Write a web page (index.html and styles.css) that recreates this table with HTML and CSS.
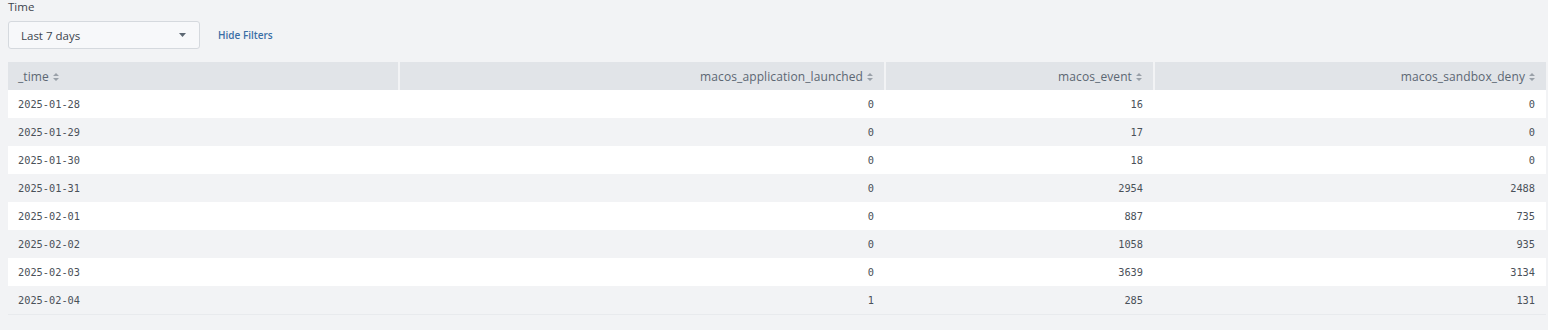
FILE: index.html
```html
<!DOCTYPE html>
<html>
<head>
<meta charset="utf-8">
<link rel="stylesheet" href="styles.css">
</head>
<body>
<div class="page">
  <div class="filters">
    <div class="label">Time</div>
    <div class="filter-row">
      <div class="dropdown">
        <span>Last 7 days</span>
        <svg class="caret" width="7" height="4" viewBox="0 0 7 4"><path d="M0 0 H7 L3.5 4 Z" fill="#5c6773"/></svg>
      </div>
      <a class="hide">Hide Filters</a>
    </div>
  </div>
  <table class="grid">
    <colgroup>
      <col class="c1"><col class="c2"><col class="c3"><col class="c4">
    </colgroup>
    <thead>
      <tr>
        <th class="left">_time<svg class="sort" width="6" height="8" viewBox="0 0 6 8"><path d="M0 3 L3 0 L6 3 Z M0 5 L6 5 L3 8 Z" fill="#9aa1a9"/></svg></th>
        <th>macos_application_launched<svg class="sort" width="6" height="8" viewBox="0 0 6 8"><path d="M0 3 L3 0 L6 3 Z M0 5 L6 5 L3 8 Z" fill="#9aa1a9"/></svg></th>
        <th>macos_event<svg class="sort" width="6" height="8" viewBox="0 0 6 8"><path d="M0 3 L3 0 L6 3 Z M0 5 L6 5 L3 8 Z" fill="#9aa1a9"/></svg></th>
        <th>macos_sandbox_deny<svg class="sort" width="6" height="8" viewBox="0 0 6 8"><path d="M0 3 L3 0 L6 3 Z M0 5 L6 5 L3 8 Z" fill="#9aa1a9"/></svg></th>
      </tr>
    </thead>
    <tbody>
      <tr><td class="left">2025-01-28</td><td>0</td><td>16</td><td>0</td></tr>
      <tr><td class="left">2025-01-29</td><td>0</td><td>17</td><td>0</td></tr>
      <tr><td class="left">2025-01-30</td><td>0</td><td>18</td><td>0</td></tr>
      <tr><td class="left">2025-01-31</td><td>0</td><td>2954</td><td>2488</td></tr>
      <tr><td class="left">2025-02-01</td><td>0</td><td>887</td><td>735</td></tr>
      <tr><td class="left">2025-02-02</td><td>0</td><td>1058</td><td>935</td></tr>
      <tr><td class="left">2025-02-03</td><td>0</td><td>3639</td><td>3134</td></tr>
      <tr><td class="left">2025-02-04</td><td>1</td><td>285</td><td>131</td></tr>
    </tbody>
  </table>
</div>
</body>
</html>
```
FILE: styles.css
```css
html, body {
  margin: 0;
  padding: 0;
  background: #f2f3f5;
}
.page {
  padding: 0 2px 0 8px;
  font-family: "Open Sans", Lato, sans-serif;
  color: #3c444d;
}
.label {
  font-size: 11.5px;
  line-height: 14px;
  color: #3c444d;
}
.filter-row {
  display: flex;
  align-items: center;
  margin-top: 7px;
  height: 28px;
}
.dropdown {
  box-sizing: border-box;
  width: 192px;
  height: 28px;
  border: 1px solid #d5d9de;
  border-radius: 3px;
  background: #f7f8fa;
  display: flex;
  align-items: center;
  justify-content: space-between;
  padding: 0 13px 0 12px;
  font-size: 11.5px;
  color: #3c444d;
}
.caret {
  display: block;
}
.hide {
  margin-left: 18px;
  font-size: 10px;
  font-weight: 600;
  color: #3a6ea5;
}
.grid {
  margin-top: 13px;
  width: 1538px;
  border-collapse: collapse;
  table-layout: fixed;
}
.c1 { width: 391px; }
.c2 { width: 486px; }
.c3 { width: 269px; }
.c4 { width: 392px; }
th {
  height: 28px;
  padding: 0 11px 0 10px;
  background: #e1e4e8;
  font-weight: normal;
  font-size: 12px;
  letter-spacing: 0.1px;
  color: #5c6773;
  text-align: right;
  border-left: 2px solid #f2f3f5;
  white-space: nowrap;
}
th:first-child { border-left: 0; }
.sort {
  display: inline-block;
  margin-left: 4px;
  vertical-align: 0;
}
td {
  height: 28px;
  padding: 0 11px 0 10px;
  font-family: "DejaVu Sans Mono", monospace;
  font-size: 10.3px;
  color: #4a5159;
  text-align: right;
}
.left { text-align: left; }
tbody tr:nth-child(odd) td { background: #ffffff; }
tbody tr:nth-child(even) td { background: #f2f3f5; }
tbody tr:last-child td { border-bottom: 1px solid #e8eaed; }
```
